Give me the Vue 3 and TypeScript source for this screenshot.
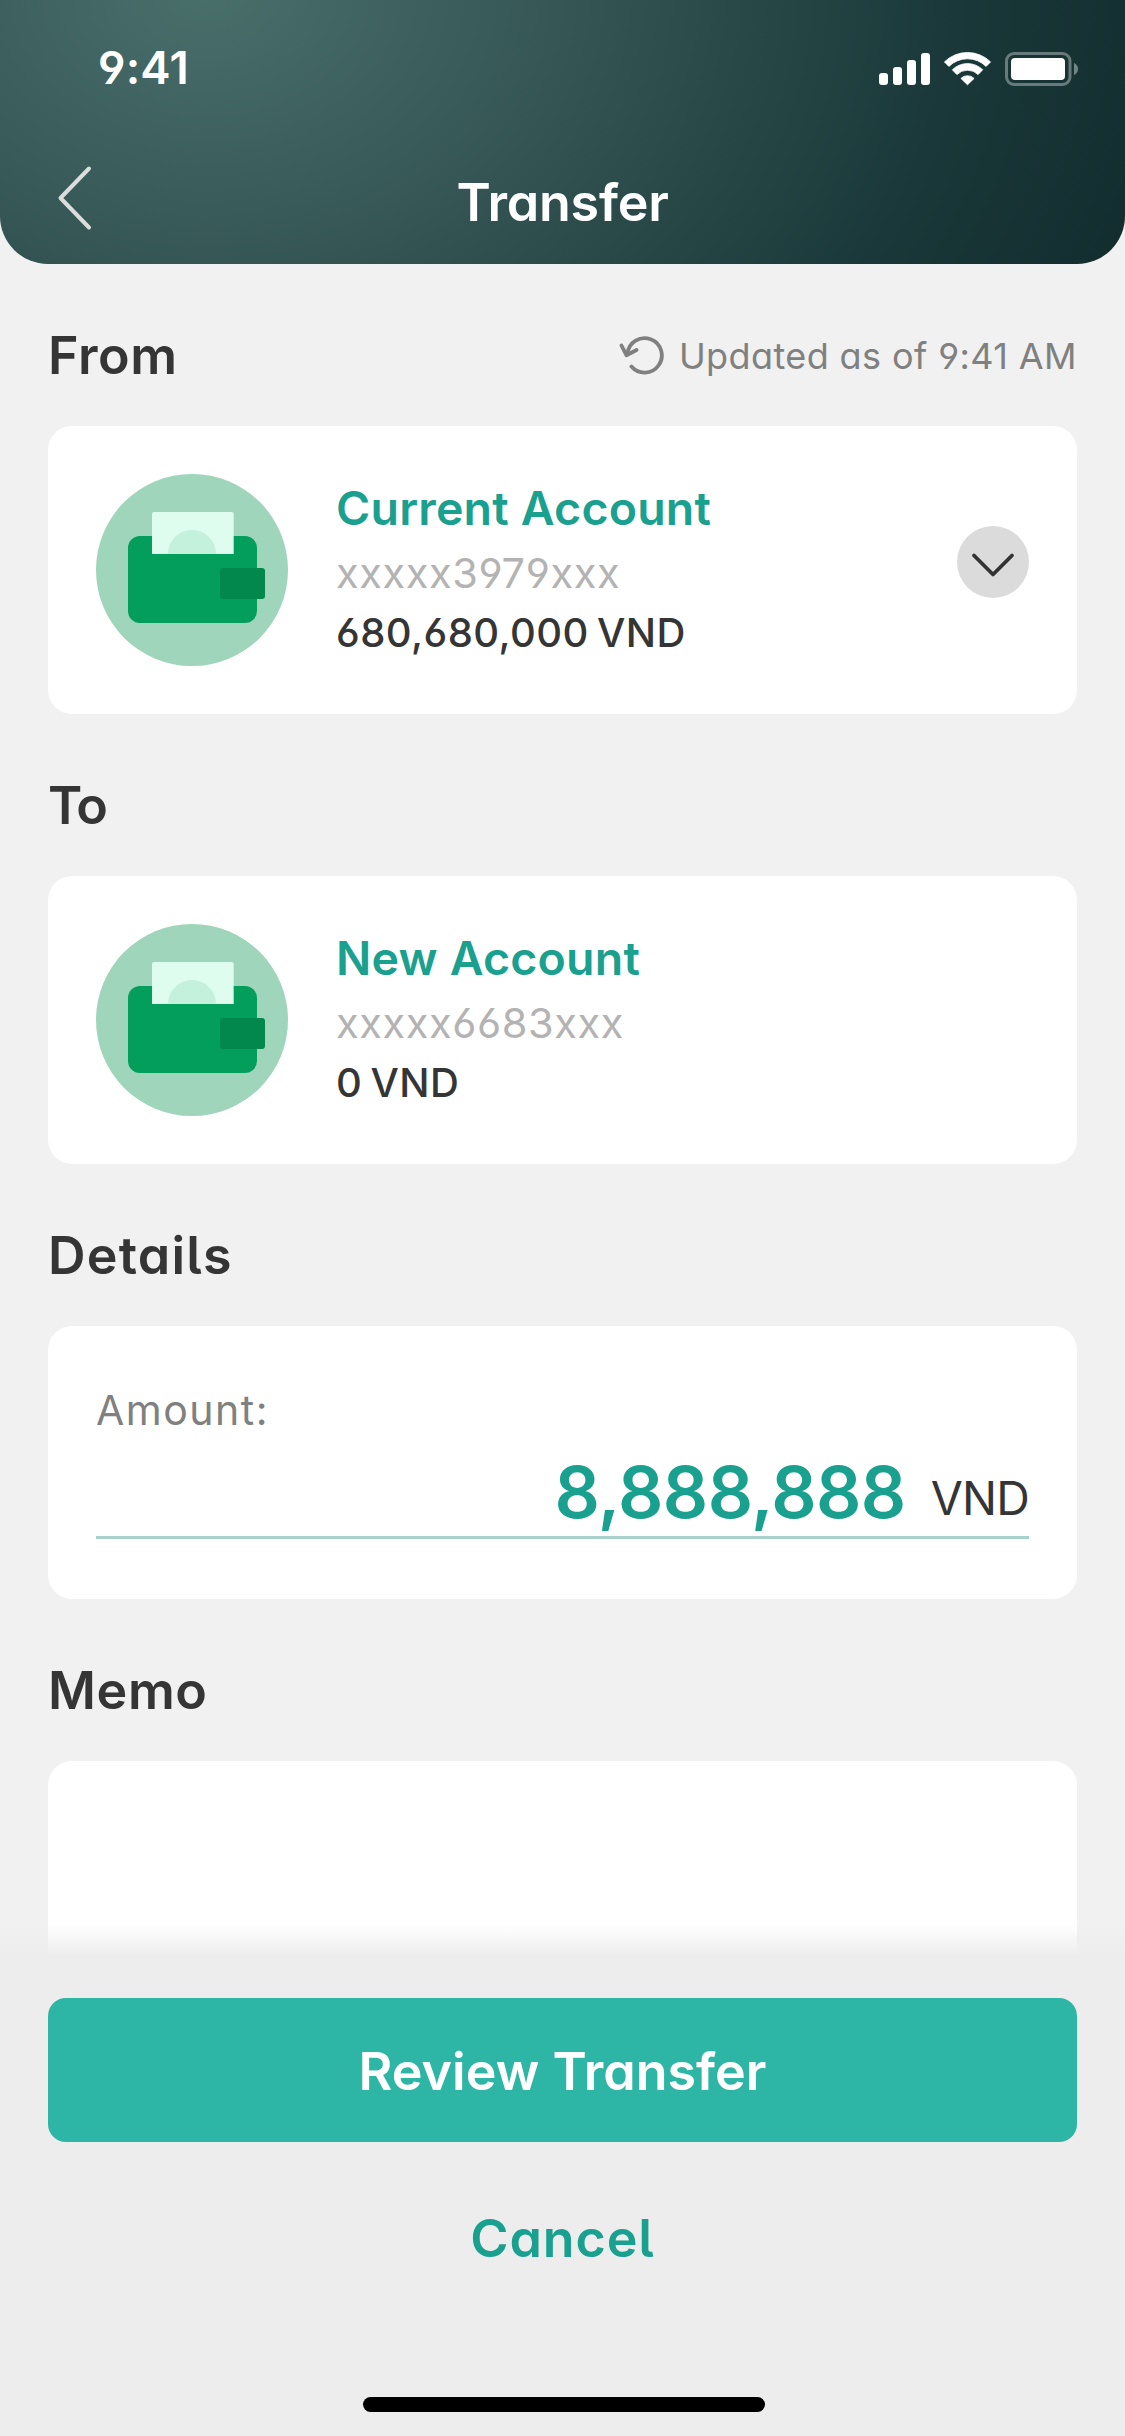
<script setup lang="ts">
interface Account {
  heading: string
  name: string
  number: string
  balance: string
  selectable: boolean
  updated?: string
}

const accounts: Account[] = [
  {
    heading: 'From',
    name: 'Current Account',
    number: 'xxxxx3979xxx',
    balance: '680,680,000 VND',
    selectable: true,
    updated: 'Updated as of 9:41 AM',
  },
  {
    heading: 'To',
    name: 'New Account',
    number: 'xxxxx6683xxx',
    balance: '0 VND',
    selectable: false,
  },
]
</script>

<template>
  <div class="screen">
    <header class="top">
      <div class="status">
        <span class="time">9:41</span>
        <svg class="status-icons" width="200" height="34" viewBox="0 0 200 34" fill="#fff">
          <rect x="0" y="21" width="9" height="12" rx="3" />
          <rect x="14" y="15" width="9" height="18" rx="3" />
          <rect x="28" y="8" width="9" height="25" rx="3" />
          <rect x="42" y="1" width="9" height="32" rx="3" />
          <path d="M65.4 9.9A33 33 0 0 1 111.6 9.9L107.1 14.4A26.6 26.6 0 0 0 69.9 14.4Z" stroke="#fff" stroke-width="0.8" stroke-linejoin="round" />
          <path d="M73.3 17.8A21.6 21.6 0 0 1 103.7 17.8L99.1 22.6A15 15 0 0 0 77.9 22.6Z" stroke="#fff" stroke-width="0.8" stroke-linejoin="round" />
          <path d="M81.9 26.4A9.4 9.4 0 0 1 95.1 26.4L88.5 32.8Z" stroke="#fff" stroke-width="0.8" stroke-linejoin="round" />
          <rect x="127.5" y="1.5" width="63.5" height="31" rx="7.5" fill="none" stroke="#fff" stroke-opacity="0.35" stroke-width="3" />
          <rect x="132" y="6" width="54" height="22" rx="4" />
          <path d="M195 11v12c2.6-1 4-3.400 4-6s-1.400-5-4-6Z" fill-opacity="0.4" />
        </svg>
      </div>
      <div class="nav">
        <svg class="back" width="36" height="66" viewBox="0 0 36 66" fill="none" stroke="#dcdcdc" stroke-width="4" stroke-linecap="round" stroke-linejoin="round">
          <path d="M33 3.500L4.500 33L33 62.500" />
        </svg>
        <h1 class="title">Transfer</h1>
      </div>
    </header>

    <main class="content">
      <section v-for="account in accounts" :key="account.heading">
        <div class="section-head">
          <h2 :class="{ tight: account.heading === 'To' }">{{ account.heading }}</h2>
          <div v-if="account.updated" class="updated">
            <svg width="46" height="42" viewBox="0 0 46 42" fill="none" stroke="#808080" stroke-width="3.800" stroke-linecap="round" stroke-linejoin="round">
              <path d="M12.500 33.500A17.200 17.200 0 1 0 8.500 20.500" />
              <path d="M2.500 12.500L7.500 22.300L17.500 17" />
            </svg>
            <span>{{ account.updated }}</span>
          </div>
        </div>
        <div class="card account">
          <svg width="192" height="192" viewBox="0 0 192 192">
            <circle cx="96" cy="96" r="96" fill="#9fd5bb" />
            <rect x="32" y="62" width="129" height="87" rx="12" fill="#039e5b" />
            <path d="M56 80V40a2 2 0 0 1 2-2h77.700a2 2 0 0 1 2 2v40Z" fill="#dffdee" />
            <path d="M72 80a24 24 0 0 1 48 0Z" fill="#c4f1dc" />
            <rect x="124" y="94" width="45" height="31" rx="3" fill="#02884d" />
          </svg>
          <div class="info">
            <div class="name">{{ account.name }}</div>
            <div class="number">{{ account.number }}</div>
            <div class="balance">{{ account.balance }}</div>
          </div>
          <svg v-if="account.selectable" class="expand" width="72" height="72" viewBox="0 0 72 72" fill="none">
            <circle cx="36" cy="36" r="36" fill="#dbdbdb" />
            <path d="M17 29.500L36 48.500L55 29.500" stroke="#333" stroke-width="3.800" stroke-linecap="round" stroke-linejoin="round" />
          </svg>
        </div>
      </section>

      <section>
        <div class="section-head"><h2 class="loose">Details</h2></div>
        <div class="card details">
          <div class="label">Amount:</div>
          <div class="amount-row">
            <span class="amount">8,888,888</span>
            <span class="currency">VND</span>
          </div>
        </div>
      </section>

      <section>
        <div class="section-head"><h2>Memo</h2></div>
        <div class="card memo"></div>
      </section>
    </main>

    <footer class="actions">
      <button class="primary">Review Transfer</button>
      <button class="cancel">Cancel</button>
      <div class="home-bar"></div>
    </footer>
  </div>
</template>

<style>
body {
  margin: 0;
  background: #f1f1f1;
}
</style>

<style scoped>
.screen {
  position: relative;
  width: 1125px;
  height: 2436px;
  overflow: hidden;
  background: #f1f1f1;
  color: #353535;
  font-family: Inter, "Liberation Sans", sans-serif;
  font-feature-settings: "cv11" 1, "cv05" 1, "cv03" 1, "cv04" 1, "calt" 0;
}

.top {
  height: 264px;
  border-radius: 0 0 48px 48px;
  background: radial-gradient(1000px 770px at 205px -10px, #4a706a 0, #436765 11%, #3d605e 22%, #335453 38%, #264646 57%, #1a3839 75%, #122c2e 100%);
  color: #fff;
}

.status {
  height: 136px;
  display: flex;
  align-items: center;
  justify-content: space-between;
  padding: 0 46px 0 98px;
  box-sizing: border-box;
}

.time {
  font-size: 45.500px;
  font-weight: 600;
  line-height: 60px;
  letter-spacing: 0.200px;
}

.status-icons {
  margin-top: 2px;
}

.nav {
  height: 128px;
  display: grid;
  grid-template-columns: 1fr auto 1fr;
  align-items: center;
  padding: 0 56px;
}

.back {
  margin-top: -4px;
}

.title {
  margin: 6px 0 0;
  font-size: 52px;
  font-weight: 600;
  line-height: 64px;
  letter-spacing: -0.250px;
}

.content {
  padding: 0 48px;
}

.section-head {
  height: 162px;
  box-sizing: border-box;
  padding-top: 22px;
  display: flex;
  align-items: center;
  justify-content: space-between;
}

h2 {
  margin: 0;
  font-size: 52px;
  font-weight: 600;
  line-height: 64px;
  letter-spacing: 0.600px;
}

h2.tight {
  letter-spacing: -2px;
}

h2.loose {
  letter-spacing: 1.200px;
}

.updated {
  display: flex;
  align-items: center;
  gap: 14px;
  color: #808080;
  font-size: 36px;
  line-height: 44px;
  letter-spacing: 0.400px;
}

.updated svg {
  margin-top: -4px;
}

.card {
  background: #fff;
  border-radius: 24px;
  box-sizing: border-box;
}

.account {
  height: 288px;
  padding: 48px;
  display: flex;
}

.info {
  flex: 1;
  margin-left: 48px;
  padding-top: 2px;
}

.name {
  font-size: 46.500px;
  font-weight: 600;
  line-height: 64px;
  letter-spacing: 0.200px;
  color: #1aa08f;
}

.number {
  font-size: 41.500px;
  line-height: 66px;
  letter-spacing: 0.600px;
  color: #b3b3b3;
}

.balance {
  font-size: 40px;
  line-height: 54px;
  font-weight: 500;
  letter-spacing: 0.450px;
  word-spacing: -3px;
}

.expand {
  margin-top: 52px;
}

.details {
  height: 273px;
  padding: 54px 48px 0;
}

.label {
  font-size: 41px;
  line-height: 60px;
  letter-spacing: 1.500px;
  color: #808080;
}

.amount-row {
  height: 99px;
  box-sizing: border-box;
  border-bottom: 3px solid #a7d1ca;
  display: flex;
  align-items: center;
  justify-content: flex-end;
}

.amount {
  padding-top: 8px;
  font-size: 71px;
  font-weight: 600;
  line-height: 80px;
  letter-spacing: -0.600px;
  color: #1aa08f;
}

.currency {
  margin-left: 25px;
  padding-top: 20px;
  font-size: 46.500px;
  line-height: 60px;
  letter-spacing: -0.800px;
}

.memo {
  height: 288px;
}

.actions {
  position: absolute;
  left: 0;
  right: 0;
  bottom: 0;
  height: 512px;
  box-sizing: border-box;
  padding: 74px 48px 24px;
  display: flex;
  flex-direction: column;
  align-items: center;
  background: linear-gradient(rgba(237, 237, 237, 0) 0, #ededed 32px);
}

button {
  width: 100%;
  height: 144px;
  flex: none;
  padding: 0;
  border: 0;
  font: inherit;
  font-feature-settings: inherit;
  font-size: 52px;
  font-weight: 600;
}

.primary {
  padding-top: 3px;
  border-radius: 18px;
  background: #2db6a5;
  color: #fff;
}

.cancel {
  margin-top: 24px;
  background: none;
  color: #1aa08f;
  letter-spacing: 0.900px;
}

.home-bar {
  width: 402px;
  height: 15px;
  margin: auto 0 0 3px;
  border-radius: 8px;
  background: #000;
}
</style>
